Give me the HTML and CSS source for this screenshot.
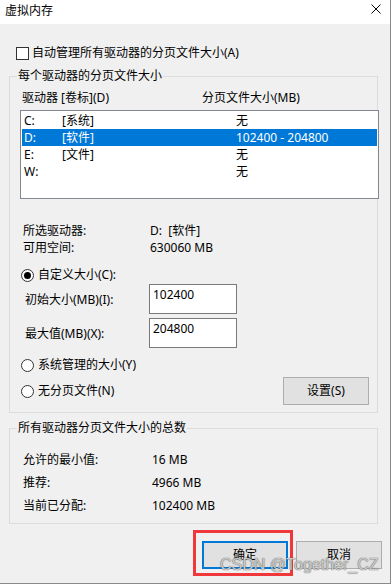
FILE: index.html
```html
<!DOCTYPE html>
<html lang="zh-CN">
<head>
  <meta charset="UTF-8" />
  <title>虚拟内存</title>
  <meta name="viewport" content="width=device-width, initial-scale=1.0" />
  <link rel="stylesheet" href="styles.css">
</head>
<body>
  <div class="dialog">
    <div class="titlebar">
      <span class="title">虚拟内存</span>
      <svg class="close" width="10" height="10" viewBox="0 0 10 10">
        <path d="M0.5 0.5 L9.5 9.5 M9.5 0.5 L0.5 9.5" stroke="#000" stroke-width="1" fill="none" />
      </svg>
    </div>

    <div class="content">
      <div class="check-row">
        <span class="checkbox"></span>
        <span>自动管理所有驱动器的分页文件大小(A)</span>
      </div>

      <div class="group group-drives">
        <div class="group-title">每个驱动器的分页文件大小</div>
        <div class="list-head">
          <span>驱动器 [卷标](D)</span>
          <span>分页文件大小(MB)</span>
        </div>
        <div class="drive-list">
          <div class="drive"><span>C:</span><span>[系统]</span><span>无</span></div>
          <div class="drive selected"><span>D:</span><span>[软件]</span><span>102400 - 204800</span></div>
          <div class="drive"><span>E:</span><span>[文件]</span><span>无</span></div>
          <div class="drive"><span>W:</span><span></span><span>无</span></div>
        </div>

        <div class="info">
          <span>所选驱动器:</span><span>D:&nbsp;&nbsp;[软件]</span>
          <span>可用空间:</span><span>630060 MB</span>
        </div>

        <div class="radio-row radio-custom">
          <span class="radio checked"></span>
          <span>自定义大小(C):</span>
        </div>
        <div class="field field-first">
          <span class="field-label">初始大小(MB)(I):</span>
          <span class="input">102400</span>
        </div>
        <div class="field">
          <span class="field-label">最大值(MB)(X):</span>
          <span class="input">204800</span>
        </div>
        <div class="radio-row radio-system">
          <span class="radio"></span>
          <span>系统管理的大小(Y)</span>
        </div>
        <div class="last-row">
          <div class="radio-row">
            <span class="radio"></span>
            <span>无分页文件(N)</span>
          </div>
          <button class="btn btn-set">设置(S)</button>
        </div>
      </div>

      <div class="group group-total">
        <div class="group-title">所有驱动器分页文件大小的总数</div>
        <div class="totals">
          <span>允许的最小值:</span><span>16 MB</span>
          <span>推荐:</span><span>4966 MB</span>
          <span>当前已分配:</span><span>102400 MB</span>
        </div>
      </div>

      <div class="buttons">
        <button class="btn btn-ok">确定</button>
        <button class="btn">取消</button>
      </div>
    </div>

    <div class="watermark">CSDN @Together_CZ</div>
  </div>
</body>
</html>
```

FILE: styles.css
```css
body {
  margin: 0;
  background: #ffffff;
  font-family: 'Noto Sans', 'Noto Sans CJK SC', sans-serif;
  font-size: 12px;
  color: #000;
}

.dialog {
  position: relative;
  width: 390px;
  height: 583px;
  background: #f0f0f0;
  border-right: 1px solid #8a8a8a;
  border-bottom: 1px solid #8a8a8a;
}

.titlebar {
  height: 24px;
  background: #ffffff;
  display: flex;
  justify-content: space-between;
  align-items: center;
  padding: 0 9px 2px 5px;
  box-sizing: border-box;
  line-height: 16px;
}

.close {
  align-self: flex-start;
  margin-top: 4px;
}

.content {
  padding: 0 8px 0 9px;
  line-height: 16px;
}

.check-row {
  display: flex;
  align-items: center;
  gap: 3px;
  height: 16px;
  margin-top: 21px;
  padding-left: 7px;
}

.checkbox {
  width: 13px;
  height: 13px;
  box-sizing: border-box;
  border: 1px solid #333;
  background: #fff;
}

/* рамки груп */
.group {
  width: 369px;
  box-sizing: border-box;
  border: 1px solid #dcdcdc;
  margin-top: 15px;
}

.group-title {
  width: fit-content;
  margin: -9px 0 0 7px;
  padding: 0 1px;
  background: #f0f0f0;
}

.group-drives {
  padding-bottom: 7px;
}

.list-head {
  display: grid;
  grid-template-columns: 180px 1fr;
  margin-top: 6px;
  padding-left: 12px;
}

.drive-list {
  width: 359px;
  height: 89px;
  box-sizing: border-box;
  margin: 4px 0 0 10px;
  padding: 1px;
  border: 1px solid #828790;
  background: #fff;
}

.drive {
  display: grid;
  grid-template-columns: 38px 174px 1fr;
  height: 17px;
  line-height: 17px;
  padding-left: 2px;
}

.drive.selected {
  background: #0078d7;
  color: #fff;
}

.info {
  display: grid;
  grid-template-columns: 127px 1fr;
  line-height: 17px;
  margin-top: 23px;
  padding-left: 13px;
}

.radio-row {
  display: flex;
  align-items: center;
  gap: 4px;
  padding-left: 11px;
}

.radio-custom {
  margin-top: 11px;
}

.radio-system {
  margin-top: 9px;
}

.radio {
  width: 13px;
  height: 13px;
  box-sizing: border-box;
  border: 1px solid #333;
  border-radius: 50%;
  background: #fff;
  display: flex;
  align-items: center;
  justify-content: center;
}

.radio.checked::before {
  content: "";
  width: 7px;
  height: 7px;
  border-radius: 50%;
  background: #000;
}

.field {
  display: flex;
  align-items: center;
  margin-top: 4px;
  padding-left: 15px;
}

.field-first {
  margin-top: 1px;
}

.field-label {
  width: 124px;
  padding-top: 2px;
}

.input {
  width: 88px;
  height: 30px;
  box-sizing: border-box;
  border: 1px solid #7a7a7a;
  background: #fff;
  padding: 2px 3px;
}

.last-row {
  display: flex;
  justify-content: space-between;
  align-items: center;
  margin-top: 4px;
  padding-right: 8px;
}

.btn {
  width: 86px;
  height: 28px;
  box-sizing: border-box;
  border: 1px solid #adadad;
  background: #e1e1e1;
  font-family: inherit;
  font-size: 12px;
  color: #000;
  padding: 0 0 2px;
}

.group-total {
  padding-bottom: 6px;
}

.totals {
  display: grid;
  grid-template-columns: 129px 1fr;
  line-height: 23px;
  margin-top: 12px;
  padding-left: 13px;
}

.buttons {
  display: flex;
  justify-content: flex-end;
  gap: 8px;
  margin-top: 17px;
}

.btn-ok {
  position: relative;
  border: 2px solid #0078d7;
}

/* червона рамка-позначка */
.btn-ok::after {
  content: "";
  position: absolute;
  top: -13px;
  left: -11px;
  right: -7px;
  bottom: -9px;
  border: 3px solid #f0383a;
}

.watermark {
  position: absolute;
  left: 220px;
  top: 557px;
  font-family: 'Liberation Sans', sans-serif;
  font-size: 16px;
  line-height: 16px;
  color: rgba(225, 225, 225, 0.85);
  text-shadow: 0 0 1px rgba(70, 70, 70, 0.9), 0 0 1px rgba(70, 70, 70, 0.6);
  white-space: nowrap;
}
```
